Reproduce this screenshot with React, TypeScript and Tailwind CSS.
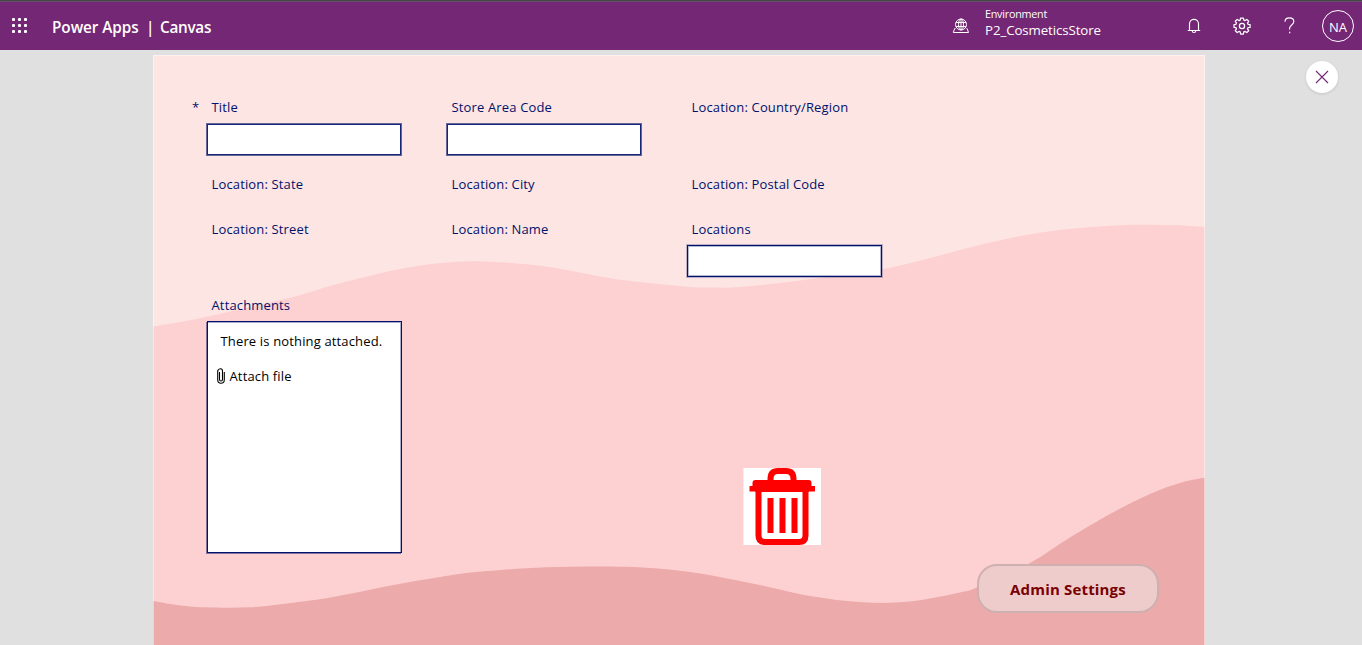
import React from "react";

type Point = [number, number];

const upperWave: Point[] = [
  [0, 271.5], [48, 263], [138, 242.5], [186, 228.5], [255, 212.5], [307, 206.8], [337, 206.8], [393, 211.5],
  [462, 224], [534, 231.7], [561, 232.5], [587, 232], [647, 225.5], [730, 214], [785, 201], [837, 187.5],
  [895, 176.5], [957, 170.7], [992, 169.7], [1026, 170.3], [1052, 172],
];

const lowerWave: Point[] = [
  [0, 546], [24, 550], [52, 552.3], [97, 552.3], [142, 547.5], [183, 541.5], [238, 530.5], [290, 521.5],
  [324, 517], [393, 512.3], [472, 511.8], [537, 517], [607, 530], [657, 541], [710, 547.3], [757, 546.5],
  [807, 537.5], [825, 532], [877, 508], [913, 485], [957, 459], [997, 439], [1027, 428], [1052, 422.5],
];

function wavePath(points: Point[]): string {
  let d = `M${points[0][0]} ${points[0][1]}`;
  for (let i = 0; i < points.length - 1; i++) {
    const a = points[Math.max(i - 1, 0)];
    const b = points[i];
    const c = points[i + 1];
    const e = points[Math.min(i + 2, points.length - 1)];
    d += ` C${b[0] + (c[0] - a[0]) / 6} ${b[1] + (c[1] - a[1]) / 6} ${c[0] - (e[0] - b[0]) / 6} ${c[1] - (e[1] - b[1]) / 6} ${c[0]} ${c[1]}`;
  }
  return `${d} V590 H0 Z`;
}

function WaveBackground() {
  return (
    <svg className="absolute inset-0 h-[590px] w-[1052px]" viewBox="0 0 1052 590" fill="none">
      <rect width="1052" height="590" fill="#fde5e4" />
      <path d={wavePath(upperWave)} fill="#fdd0d1" />
      <path d={wavePath(lowerWave)} fill="#ecaaaa" />
      <path d="M0.5 590V0.5H1051.5V590" stroke="#fff" strokeOpacity="0.45" />
    </svg>
  );
}

function WaffleIcon() {
  const steps = [0, 6, 12];
  return (
    <svg className="size-[17px]" viewBox="0 0 17 17" fill="#fff">
      {steps.map((y) => steps.map((x) => <rect key={`${x}-${y}`} x={x + 1} y={y} width="3" height="3" rx="0.9" />))}
    </svg>
  );
}

function EnvironmentIcon() {
  return (
    <svg className="h-[16px] w-[17px]" viewBox="0 0 17 16" fill="none" stroke="#fff" strokeWidth="1">
      <circle cx="9" cy="6.5" r="5.5" />
      <ellipse cx="9" cy="6.5" rx="2.5" ry="5.5" />
      <path d="M4 4.5h10M4 8.5h10M9 1v11M3.5 10.5h-.8L1.3 14.5h15.2l-1.4-4H14.5" />
    </svg>
  );
}

function BellIcon() {
  return (
    <svg className="h-[16px] w-[14px]" viewBox="0 0 14 16" fill="none" stroke="#fff" strokeWidth="1.15">
      <path d="M2.5 12.5V5.8a4.5 4.5 0 0 1 9 0v6.7M.8 12.5h12.4M5.2 12.7a1.8 1.8 0 0 0 3.6 0" />
    </svg>
  );
}

function GearIcon() {
  return (
    <svg className="size-[18px]" viewBox="0 0 18 18" fill="none" stroke="#fff" strokeWidth="1.25" strokeLinejoin="round">
      <path d="M7.6 1h2.8l.4 2.1 1.2.5 1.8-1.2 1.9 1.9-1.2 1.8.5 1.2 2.1.4v2.6l-2.1.4-.5 1.2 1.2 1.8-1.9 1.9-1.8-1.2-1.2.5-.4 2.1H7.6l-.4-2.1-1.2-.5-1.8 1.2-1.9-1.9 1.2-1.8-.5-1.2L1 10.3V7.7l2-.4.5-1.2-1.2-1.8 1.9-1.9L6 3.6l1.2-.5z" />
      <circle cx="9" cy="9" r="2.6" />
    </svg>
  );
}

function HelpIcon() {
  return (
    <svg className="h-[17px] w-[11px]" viewBox="0 0 11 17" fill="none" stroke="#fff" strokeWidth="1.15">
      <path d="M1 4.8C1 2.3 2.9.9 5.4.9s4.4 1.4 4.4 3.7c0 3.2-4.2 3.6-4.2 6.7v1.2" />
      <path d="M5 15.5h1.3" strokeWidth="1.3" />
    </svg>
  );
}

function PaperclipIcon() {
  return (
    <svg className="h-[16px] w-[8px]" viewBox="0 0 8 16" fill="none" stroke="#000" strokeWidth="1.1">
      <path d="M2.5 4v7.5a1.5 1.5 0 0 0 3 0V3.3C5.5 1.7 4.9.7 3.7.7S.7 1.7.7 3.3v8.5c0 2.2 1.2 3.5 3.3 3.5s3.3-1.3 3.3-3.5V4" />
    </svg>
  );
}

function TrashIcon() {
  return (
    <svg className="size-[78px]" viewBox="0 0 78 78">
      <rect x="0.5" y="1" width="77.5" height="77" fill="#fff" />
      <path d="M27.5 14V12Q27.5 4 35 4H43Q50.5 4 50.5 12V14" fill="none" stroke="#f00" strokeWidth="6" />
      <path d="M9.5 19V16Q9.5 13 12.5 13H65.5Q68.5 13 68.5 16V19H72V24.5H66V25H12V24.5H6.5V19H9.5Z" fill="#f00" />
      <path d="M15.5 22V68.5Q15.5 75 22 75H56Q62.5 75 62.5 68.5V22" fill="none" stroke="#f00" strokeWidth="6" />
      <path d="M27.5 31V66M39.5 31V66M51.5 31V66" stroke="#f00" strokeWidth="6" />
    </svg>
  );
}

function Header() {
  return (
    <header className="flex h-[50px] items-center border-t border-[#454545] bg-[#742774] text-white shadow-[inset_0_1px_0_#65506a]">
      <button className="ml-[11px] mt-px flex w-[17px] justify-center" aria-label="App launcher"><WaffleIcon /></button>
      <div className="ml-[24px] mt-[2px] flex w-[900px] items-center whitespace-pre text-[15.3px] font-semibold leading-5">
        <span className="w-[94px] tracking-[-0.05px]">Power Apps</span>
        <span className="w-[14px]">|</span>
        <span className="tracking-[-0.28px]">Canvas</span>
      </div>
      <EnvironmentIcon />
      <div className="ml-[16px] w-[202px] pb-[8px]">
        <div className="text-[10.8px] leading-[16px] tracking-[-0.25px]">Environment</div>
        <div className="text-[13.3px] leading-[16px] tracking-[-0.1px]">P2_CosmeticsStore</div>
      </div>
      <button className="flex w-[14px] justify-center" aria-label="Notifications"><BellIcon /></button>
      <button className="ml-[32px]" aria-label="Settings"><GearIcon /></button>
      <button className="ml-[33px]" aria-label="Help"><HelpIcon /></button>
      <div className="ml-[27px] flex size-8 shrink-0 items-center justify-center rounded-full border border-white pt-[4px] text-[13px] font-medium">NA</div>
    </header>
  );
}

function Label({ children, required }: { children: string; required?: boolean }) {
  return (
    <div className="flex h-[18px] items-center whitespace-nowrap pl-[5px] text-[13px] leading-[18px] tracking-[0.15px] text-[#00126b]">
      {required && <span className="-ml-[19.5px] w-[19.5px]">*</span>}
      {children}
    </div>
  );
}

function TextField() {
  return (
    <input className="-ml-[0.5px] mt-[7px] block h-[33px] w-[196px] border border-[#00126b]/60 bg-white bg-clip-padding px-2 text-[13px] shadow-[inset_0_0_0_1px_#14257a] outline-none" />
  );
}

function LookupField() {
  return (
    <input className="ml-[0.5px] mt-[7px] block h-[32px] w-[195px] border border-[#00126b] bg-white px-2 text-[13px] shadow-[0_0_0_1px_rgba(0,18,107,0.25),inset_0_0_0_1px_rgba(0,18,107,0.3)] outline-none" />
  );
}

function StoreForm() {
  return (
    <form className="grid w-[720px] grid-cols-[240px_240px_240px] grid-rows-[77px_45px_76px_256px]">
      <div><Label required>Title</Label><TextField /></div>
      <div><Label>Store Area Code</Label><TextField /></div>
      <Label>Location: Country/Region</Label>
      <Label>Location: State</Label>
      <Label>Location: City</Label>
      <Label>Location: Postal Code</Label>
      <Label>Location: Street</Label>
      <Label>Location: Name</Label>
      <div><Label>Locations</Label><LookupField /></div>
      <div>
        <Label>Attachments</Label>
        <div className="ml-[0.5px] mt-[7px] h-[232px] w-[195px] border border-[#00126b] bg-white text-[13px] leading-[18px] tracking-[0.15px] text-black shadow-[-1px_1px_0_rgba(0,18,107,0.5),inset_-1px_1px_0_rgba(0,18,107,0.35)]">
          <div className="mt-[10px] pl-[12.5px]">There is nothing attached.</div>
          <div className="mt-[17px] flex items-center gap-[5px] pl-[8.5px]"><PaperclipIcon />Attach file</div>
        </div>
      </div>
    </form>
  );
}

export default function App() {
  return (
    <div className="h-[645px] w-[1362px] overflow-hidden bg-[#e0e0e0] font-['Open_Sans',sans-serif]">
      <Header />
      <div className="flex">
        <main className="relative ml-[153px] mt-[5px] h-[590px] w-[1052px] shrink-0">
          <WaveBackground />
          <div className="relative flex h-full pl-[53.5px] pt-[43px]">
            <StoreForm />
          </div>
          <button className="absolute left-[590px] top-[412px]" aria-label="Delete"><TrashIcon /></button>
          <button className="absolute left-[824px] top-[509px] h-[49px] w-[182px] rounded-[20px] border-2 border-[#cfb0b0] bg-[#eecccc] pt-[2px] text-[15px] font-bold tracking-[0.17px] text-[#790000]">
            Admin Settings
          </button>
        </main>
        <button className="ml-[101px] mt-[11px] flex size-8 items-center justify-center rounded-full bg-white shadow-[0_1px_3px_rgba(0,0,0,0.12)]" aria-label="Close">
          <svg className="size-[14px]" viewBox="0 0 14 14" stroke="#742774" strokeWidth="1.1"><path d="M1 1l12 12M13 1L1 13" /></svg>
        </button>
      </div>
    </div>
  );
}
